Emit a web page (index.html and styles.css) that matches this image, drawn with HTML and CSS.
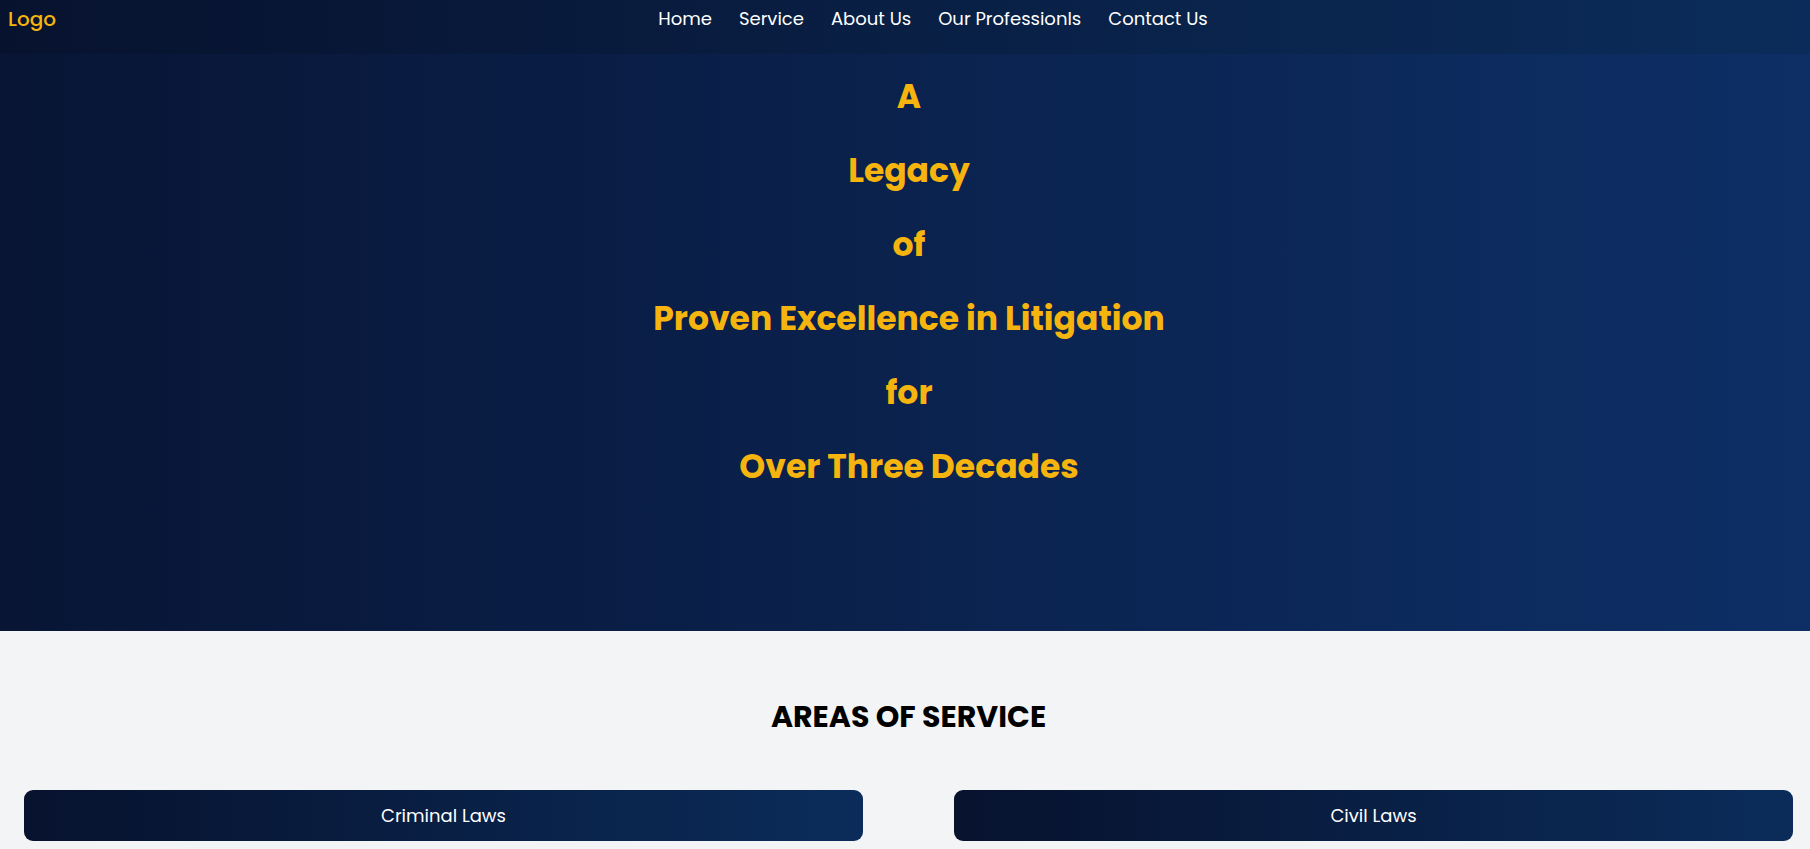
FILE: index.html
```html
<!DOCTYPE html>
<html lang="en">
<head>
  <meta charset="utf-8">
  <meta name="viewport" content="width=device-width, initial-scale=1">
  <title>Law Firm</title>
  <link rel="stylesheet" href="styles.css">
</head>
<body>
  <header class="site-header">
    <a class="logo" href="#">Logo</a>
    <nav class="site-nav" aria-label="Main">
      <ul class="nav-list">
        <li><a class="nav-link" href="#home">Home</a></li>
        <li><a class="nav-link" href="#service">Service</a></li>
        <li><a class="nav-link" href="#about">About Us</a></li>
        <li><a class="nav-link" href="#professions">Our Professionls</a></li>
        <li><a class="nav-link" href="#contact">Contact Us</a></li>
      </ul>
    </nav>
    <div class="header-end"></div>
  </header>
  <main>
    <section class="hero" id="home">
      <h1 class="hero-title">
        <span>A</span>
        <span>Legacy</span>
        <span>of</span>
        <span>Proven Excellence in Litigation</span>
        <span>for</span>
        <span>Over Three Decades</span>
      </h1>
    </section>
    <section class="services" id="service">
      <h2 class="services-title">AREAS OF SERVICE</h2>
      <div class="services-grid">
        <a class="service-card" href="#criminal">Criminal Laws</a>
        <a class="service-card" href="#civil">Civil Laws</a>
      </div>
    </section>
  </main>
</body>
</html>
```
FILE: styles.css
```css
* {
  box-sizing: border-box;
}

body {
  margin: 0;
  min-height: 100vh;
  background: #f2f4f6;
  color: #000;
  font-family: Poppins, Inter, sans-serif;
}

.site-header {
  display: flex;
  justify-content: space-between;
  align-items: flex-start;
  padding: 5px 0 21px 8px;
  background: linear-gradient(to right, #07122e, #0b2c5a);
}

.logo {
  color: #f6b40f;
  font-size: 20px;
  font-weight: 500;
  line-height: 28px;
  text-decoration: none;
}

.nav-list {
  display: flex;
  flex-wrap: wrap;
  gap: 0 27px;
  margin: 0;
  padding: 0;
  list-style: none;
}

.nav-link {
  display: block;
  color: #fff;
  font-size: 18px;
  line-height: 28px;
  text-decoration: none;
}

.hero {
  padding: 19px 0 140px 8px;
  background: linear-gradient(to right, #081535, #0d2f66);
}

.hero-title {
  display: flex;
  flex-direction: column;
  align-items: center;
  gap: 26px;
  margin: 0;
  color: #f6b40f;
  font-size: 33px;
  font-weight: 700;
  line-height: 48px;
  text-align: center;
}

.services {
  padding: 64px 17px 8px 24px;
}

.services-title {
  margin: 0 0 51px;
  font-size: 30px;
  font-weight: 700;
  line-height: 44px;
  text-align: center;
}

.services-grid {
  display: grid;
  grid-template-columns: 1fr 1fr;
  gap: 24px 91px;
}

.service-card {
  padding: 12px;
  border-radius: 9px;
  background: linear-gradient(to right, #07122e, #0b2c5a);
  color: #fff;
  font-size: 18px;
  line-height: 27px;
  text-align: center;
  text-decoration: none;
}
```
